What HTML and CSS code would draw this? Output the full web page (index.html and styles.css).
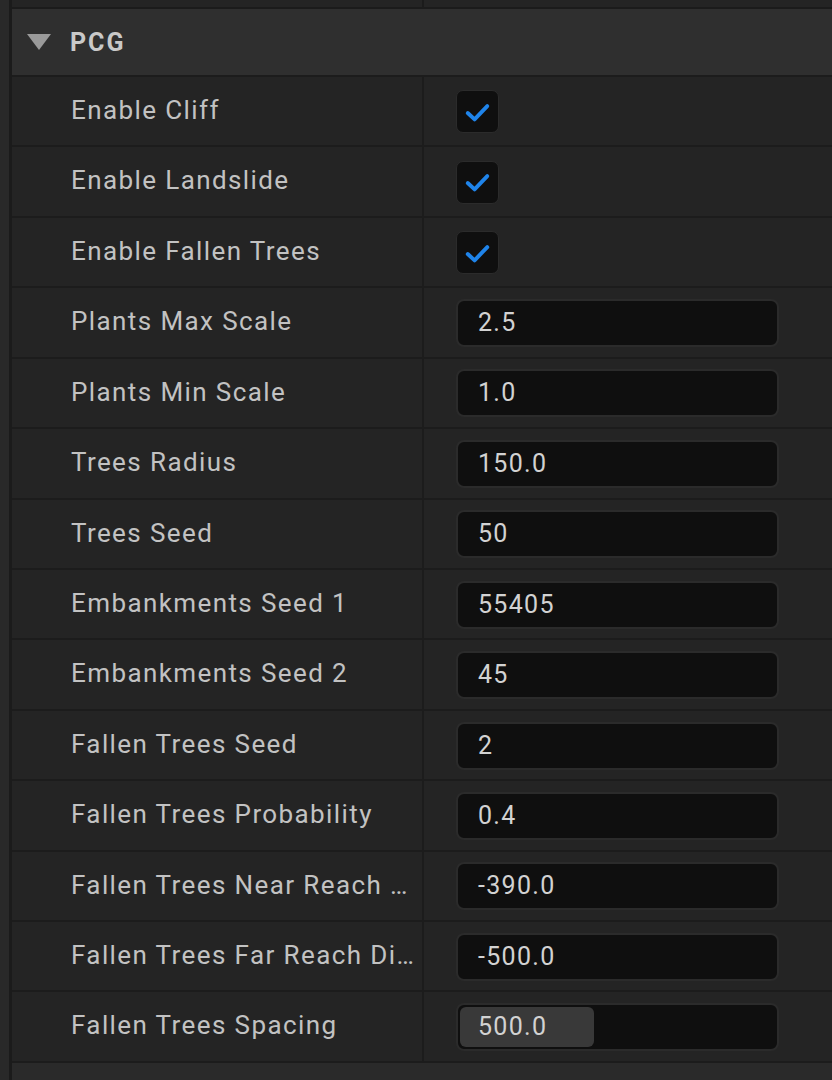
FILE: index.html
```html
<!DOCTYPE html>
<html>
<head>
<meta charset="utf-8">
<link rel="stylesheet" href="styles.css">
</head>
<body>
<div class="app">
  <div class="gutter"></div>
  <div class="panel">
    <div class="stub"><div class="stub-name"></div><div class="stub-value"></div></div>
    <div class="category">
      <svg class="arrow" width="26" height="18" viewBox="0 0 26 18"><polygon points="1,1 25,1 13,17" fill="#9a9a9a"/></svg>
      <span class="cat-title">PCG</span>
    </div>
    <div class="rows">
      <div class="row"><div class="name">Enable Cliff</div><div class="value"><span class="check"><svg width="42" height="42" viewBox="0 0 42 42"><polyline points="11,22 18,28.5 31,15" fill="none" stroke="#1f84ea" stroke-width="4" stroke-linecap="round" stroke-linejoin="round"/></svg></span></div></div>
      <div class="row"><div class="name">Enable Landslide</div><div class="value"><span class="check"><svg width="42" height="42" viewBox="0 0 42 42"><polyline points="11,22 18,28.5 31,15" fill="none" stroke="#1f84ea" stroke-width="4" stroke-linecap="round" stroke-linejoin="round"/></svg></span></div></div>
      <div class="row"><div class="name">Enable Fallen Trees</div><div class="value"><span class="check"><svg width="42" height="42" viewBox="0 0 42 42"><polyline points="11,22 18,28.5 31,15" fill="none" stroke="#1f84ea" stroke-width="4" stroke-linecap="round" stroke-linejoin="round"/></svg></span></div></div>
      <div class="row"><div class="name">Plants Max Scale</div><div class="value"><div class="field">2.5</div></div></div>
      <div class="row"><div class="name">Plants Min Scale</div><div class="value"><div class="field">1.0</div></div></div>
      <div class="row"><div class="name">Trees Radius</div><div class="value"><div class="field">150.0</div></div></div>
      <div class="row"><div class="name">Trees Seed</div><div class="value"><div class="field">50</div></div></div>
      <div class="row"><div class="name">Embankments Seed 1</div><div class="value"><div class="field">55405</div></div></div>
      <div class="row"><div class="name">Embankments Seed 2</div><div class="value"><div class="field">45</div></div></div>
      <div class="row"><div class="name">Fallen Trees Seed</div><div class="value"><div class="field">2</div></div></div>
      <div class="row"><div class="name">Fallen Trees Probability</div><div class="value"><div class="field">0.4</div></div></div>
      <div class="row"><div class="name">Fallen Trees Near Reach Distance</div><div class="value"><div class="field">-390.0</div></div></div>
      <div class="row"><div class="name">Fallen Trees Far Reach Distance</div><div class="value"><div class="field">-500.0</div></div></div>
      <div class="row"><div class="name">Fallen Trees Spacing</div><div class="value"><div class="field slider"><div class="fill" style="width:42%"></div><span class="slider-text">500.0</span></div></div></div>
    </div>
    <div class="footer"></div>
  </div>
</div>
</body>
</html>
```
FILE: styles.css
```css
* { box-sizing: border-box; }
html, body { margin: 0; padding: 0; }
body {
  width: 832px;
  height: 1080px;
  overflow: hidden;
  background: #1c1c1c;
  font-family: Roboto, "Noto Sans", sans-serif;
}
.app {
  display: flex;
  height: 1080px;
}
.gutter {
  flex: 0 0 12px;
  background: #292929;
  border-right: 3px solid #1b1b1b;
}
.panel {
  flex: 1;
  display: flex;
  flex-direction: column;
  min-width: 0;
}
.stub {
  height: 9px;
  flex: 0 0 9px;
  display: flex;
  border-bottom: 2px solid #1b1b1b;
  background: #242424;
}
.stub-name {
  flex: 0 0 412px;
  border-right: 2px solid #1b1b1b;
}
.stub-value { flex: 1; }
.category {
  height: 68px;
  flex: 0 0 68px;
  background: #2f2f2f;
  display: flex;
  align-items: center;
  padding-left: 14px;
  border-bottom: 2px solid #1c1c1c;
}
.arrow { margin-right: 18px; margin-top: 0; }
.cat-title {
  color: #c9c9c9;
  font-weight: 700;
  font-size: 25px;
  letter-spacing: 2px;
}
.rows { display: flex; flex-direction: column; }
.row {
  height: 70.43px;
  flex: 0 0 70.43px;
  display: flex;
  background: #242424;
  border-bottom: 2px solid #1c1c1c;
}
.name {
  flex: 0 0 412px;
  padding-left: 59px;
  padding-right: 6px;
  padding-top: 1px;
  color: #c2c2c2;
  font-size: 26px;
  letter-spacing: 1.4px;
  line-height: 64px;
  white-space: nowrap;
  overflow: hidden;
  text-overflow: ellipsis;
  border-right: 2px solid #1c1c1c;
}
.value {
  flex: 1;
  display: flex;
  align-items: center;
  padding-left: 32px;
  padding-top: 1px;
}
.check {
  width: 43px;
  height: 43px;
  background: #0f0f0f;
  border: 1px solid #2b2b2b;
  border-radius: 7px;
  display: flex;
  align-items: center;
  justify-content: center;
}
.field {
  width: 323px;
  height: 48px;
  background: #0f0f0f;
  border: 2px solid #2b2b2b;
  border-radius: 8px;
  color: #d2d2d2;
  font-size: 25px;
  letter-spacing: 1.3px;
  line-height: 44px;
  padding-left: 20px;
}
.slider {
  position: relative;
  padding: 0;
  overflow: hidden;
}
.fill {
  position: absolute;
  left: 2px;
  top: 2px;
  bottom: 2px;
  background: #393939;
  border-radius: 6px;
}
.slider-text {
  position: relative;
  padding-left: 20px;
}
.footer {
  flex: 1;
  background: #2a2a2a;
}
```
